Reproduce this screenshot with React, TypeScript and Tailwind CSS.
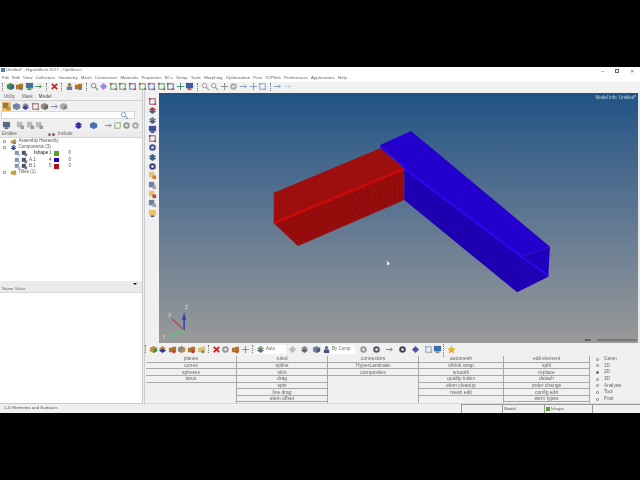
import { FC } from "react";

type Pt = [number, number];

const mix = (a: Pt, b: Pt, t: number): Pt => [a[0] + (b[0] - a[0]) * t, a[1] + (b[1] - a[1]) * t];

// wireframe over one face of the bar
const Mesh: FC<{ q: [Pt, Pt, Pt, Pt]; nu: number; nv: number; stroke: string; opacity: number }> = ({ q, nu, nv, stroke, opacity }) => {
  const [a, b, c, d] = q;
  const lines: [Pt, Pt][] = [];
  for (let i = 1; i < nu; i++) lines.push([mix(a, b, i / nu), mix(d, c, i / nu)]);
  for (let j = 1; j < nv; j++) lines.push([mix(a, d, j / nv), mix(b, c, j / nv)]);
  return (
    <g stroke={stroke} strokeOpacity={opacity} strokeWidth={1}>
      {lines.map(([p, r], i) => (
        <line key={i} x1={p[0]} y1={p[1]} x2={r[0]} y2={r[1]} />
      ))}
    </g>
  );
};

const Model: FC = () => (
  <svg className="absolute inset-0 h-full w-full" viewBox="0 0 477 250" preserveAspectRatio="none">
    <g transform="translate(101 27) scale(0.3333)">
      <polygon points="40,218 358,85 430,145 40,310" fill="#a00f0f" />
      <polygon points="40,310 430,145 430,240 112,378" fill="#980d0d" />
      <Mesh q={[[40, 218], [358, 85], [430, 145], [40, 310]]} nu={24} nv={8} stroke="#6f0808" opacity={0.3} />
      <Mesh q={[[40, 310], [430, 145], [430, 240], [112, 378]]} nu={24} nv={8} stroke="#5f0606" opacity={0.5} />
      <line x1={40} y1={309} x2={430} y2={146} stroke="#c80a0a" strokeWidth={8} />
      <polygon points="358,75 450,33 865,380 780,410 430,145" fill="#2400cf" />
      <polygon points="430,145 780,410 860,470 767,517 430,240" fill="#1f00b4" />
      <polygon points="780,410 865,380 860,470" fill="#2000bd" />
      <polygon points="358,75 358,85 430,145 430,138" fill="#2d0ad8" />
      <Mesh q={[[430, 145], [780, 410], [767, 517], [430, 240]]} nu={30} nv={8} stroke="#14008a" opacity={0.3} />
      <line x1={430} y1={146} x2={780} y2={410} stroke="#2a08e6" strokeWidth={7} />
      <line x1={780} y1={410} x2={860} y2={467} stroke="#2a08e6" strokeWidth={7} />
    </g>
    {/* triad */}
    <line x1={25} y1={237} x2={13} y2={226} stroke="#b05050" strokeWidth={1.5} />
    <line x1={25} y1={237} x2={25} y2={222} stroke="#3a3ac0" strokeWidth={1.5} />
    <polygon points="25,219 23,227 27,227" fill="#3a3ac0" />
    <line x1={25} y1={237} x2={9} y2={245} stroke="#60c080" strokeWidth={1.5} />
    <text x={9} y={224} fontSize={5} fill="#dddddd" fontFamily="Liberation Sans, sans-serif">X</text>
    <text x={26} y={216} fontSize={5} fill="#dddddd" fontFamily="Liberation Sans, sans-serif">Z</text>
    <text x={3} y={246} fontSize={5} fill="#dddddd" fontFamily="Liberation Sans, sans-serif">Y</text>
    {/* scale bar */}
    <line x1={436} y1={247} x2={476} y2={247} stroke="#555555" strokeWidth={1} />
    <line x1={424} y1={247} x2={430} y2={247} stroke="#555555" strokeWidth={1.5} />
    {/* cursor */}
    <polygon points="227,167 227,173 229,171.5 231,172" fill="#ffffff" stroke="#555555" strokeWidth={0.3} />
  </svg>
);

type Kind = "cube" | "layers" | "flag" | "person" | "folder" | "diamond" | "frame" | "mag" | "cross" | "star" | "x" | "arrow" | "gear" | "panel";

const Glyph: FC<{ kind: Kind; a?: string; b?: string; bg?: string }> = ({ kind, a = "#6a7f96", b = "#b3742a", bg }) => (
  <span className={`flex h-[9px] w-[9px] shrink-0 items-center justify-center ${bg ?? ""}`}>
    <svg viewBox="0 0 10 10" className="h-[9px] w-[9px]">
      {kind === "cube" && (
        <>
          <polygon points="1,3 5,1 9,3 9,7 5,9 1,7" fill={a} />
          <polygon points="5,5 9,3 9,7 5,9" fill={b} />
        </>
      )}
      {kind === "layers" && (
        <>
          <polygon points="1,4 5,1 9,4 5,6" fill={b} />
          <polygon points="1,6 5,4 9,6 5,9" fill={a} />
        </>
      )}
      {kind === "flag" && (
        <>
          <rect x={1} y={1} width={6} height={6} fill={a} />
          <rect x={5} y={5} width={4} height={4} fill={b} />
        </>
      )}
      {kind === "person" && (
        <>
          <circle cx={5} cy={3} r={2} fill={b} />
          <rect x={2} y={5} width={6} height={4} fill={a} />
        </>
      )}
      {kind === "folder" && (
        <>
          <polygon points="1,3 4,3 5,2 9,2 9,8 1,8" fill={b} />
          <rect x={5} y={6} width={3} height={3} fill={a} />
        </>
      )}
      {kind === "diamond" && <polygon points="5,1 9,5 5,9 1,5" fill={a} />}
      {kind === "frame" && (
        <>
          <rect x={2} y={2} width={6} height={6} fill="none" stroke={a} strokeWidth={1} />
          <rect x={1} y={1} width={2} height={2} fill={b} />
          <rect x={7} y={7} width={2} height={2} fill={b} />
        </>
      )}
      {kind === "mag" && (
        <>
          <circle cx={4} cy={4} r={2.5} fill="none" stroke={a} strokeWidth={1} />
          <line x1={6} y1={6} x2={9} y2={9} stroke={a} strokeWidth={1.2} />
        </>
      )}
      {kind === "cross" && <path d="M5 1V9M1 5H9" stroke={a} strokeWidth={1} />}
      {kind === "arrow" && <path d="M1 5H8M6 3L8 5L6 7" stroke={a} strokeWidth={1} fill="none" />}
      {kind === "star" && <polygon points="5,0.5 6.4,3.6 9.6,4 7.2,6.2 7.9,9.5 5,7.8 2.1,9.5 2.8,6.2 0.4,4 3.6,3.6" fill="#e3b51c" />}
      {kind === "x" && <path d="M2 2L8 8M8 2L2 8" stroke="#d02020" strokeWidth={2} />}
      {kind === "gear" && (
        <>
          <circle cx={5} cy={5} r={3.6} fill={a} />
          <circle cx={5} cy={5} r={1.4} fill="#eeeeee" />
        </>
      )}
      {kind === "panel" && (
        <>
          <rect x={1} y={1} width={8} height={6} fill={a} />
          <rect x={3} y={7} width={4} height={2} fill={b} />
        </>
      )}
    </svg>
  </span>
);

const Sep: FC = () => <span className="mx-[2px] h-[8px] w-px shrink-0 border-l border-dotted border-[#777]" />;

const menus = ["File", "Edit", "View", "Collectors", "Geometry", "Mesh", "Connectors", "Materials", "Properties", "BCs", "Setup", "Tools", "Morphing", "Optimization", "Post", "XYPlots", "Preferences", "Applications", "Help"];

const col1 = ["planes", "cones", "spheres", "torus"];
const col2 = ["ruled", "spline", "skin", "drag", "spin", "line drag", "elem offset"];
const col3 = ["connectors", "HyperLaminate", "composites"];
const col4 = ["automesh", "shrink wrap", "smooth", "quality index", "elem cleanup", "mesh edit"];
const col5 = ["edit element", "split", "replace", "detach", "order change", "config edit", "elem types"];
const radios = ["Geom", "1D", "2D", "3D", "Analysis", "Tool", "Post"];

const ButtonCol: FC<{ items: string[]; className: string }> = ({ items, className }) => (
  <div className={`flex shrink-0 flex-col ${className}`}>
    {items.map((label) => (
      <div key={label} className="flex h-[6.65px] items-center justify-center border-b border-[#a8a8a8] text-[5px] leading-none text-[#666]">
        {label}
      </div>
    ))}
  </div>
);

const Expander: FC = () => <span className="mr-[3px] h-[3px] w-[3px] shrink-0 border border-[#aaa]" />;

const TreeRoot: FC<{ label: string; icon: Kind; a: string; b: string }> = ({ label, icon, a, b }) => (
  <div className="flex h-[6.3px] items-center whitespace-nowrap pl-[3px] text-[4.5px] leading-none text-[#555]">
    <Expander />
    <span className="mr-[0.5px] scale-75">
      <Glyph kind={icon} a={a} b={b} />
    </span>
    {label}
  </div>
);

const TreeLeaf: FC<{ label: string; id: string; color: string; bold?: boolean }> = ({ label, id, color, bold }) => (
  <div className="flex h-[6.3px] items-center whitespace-nowrap pl-[13px] text-[4.5px] leading-none text-[#555]">
    <span className="scale-75">
      <Glyph kind="flag" a="#7f93b0" b="#b8c4d4" />
    </span>
    <span className="-ml-[2px] scale-75">
      <Glyph kind="flag" a="#4a5568" b="#6a7588" />
    </span>
    <span className={`w-[20px] ${bold ? "pl-[5px] font-bold" : ""}`}>{label}</span>
    <span className="w-[5px]">{id}</span>
    <span className={`h-[4.5px] w-[4.5px] shrink-0 ${color}`} />
    <span className="ml-[10px]">0</span>
  </div>
);

export default function App() {
  return (
    <div className="flex h-[480px] w-[640px] flex-col overflow-hidden bg-black font-['Liberation_Sans',sans-serif]">
      <div className="h-[67px] shrink-0" />
      <div className="flex h-[346px] shrink-0 flex-col bg-[#f0f0f0] blur-[0.35px]">
        {/* title */}
        <div className="flex h-[7px] shrink-0 items-center justify-between bg-white pl-[1px] pr-[6px] text-[4.3px] leading-none text-[#666]">
          <div className="flex items-center gap-[1px]">
            <span className="h-[4px] w-[4px] bg-[#5a7fa8]" />
            <span>Untitled* - HyperMesh 2017 - OptiStruct</span>
          </div>
          <div className="flex items-center gap-[11px] text-[6px] text-[#555]">
            <span>–</span>
            <span className="h-[4px] w-[4px] border border-[#666]" />
            <span>×</span>
          </div>
        </div>
        {/* menu */}
        <div className="flex h-[8px] shrink-0 items-center gap-[3.2px] bg-white pl-[2px] text-[4.4px] leading-none text-[#666]">
          {menus.map((m) => (
            <span key={m}>{m}</span>
          ))}
        </div>
        {/* main toolbar */}
        <div className="flex h-[9px] shrink-0 items-center gap-[0.6px] bg-[#f2f2f2]">
          <Sep />
          <Glyph kind="cube" a="#3f8f4a" b="#3a5fa8" />
          <Glyph kind="folder" />
          <Glyph kind="panel" a="#4a6f9a" b="#3a8f4a" />
          <Glyph kind="arrow" a="#3a8f4a" />
          <Sep />
          <Glyph kind="x" />
          <Sep />
          <Glyph kind="person" />
          <Glyph kind="folder" />
          <Sep />
          <Glyph kind="mag" />
          <Glyph kind="diamond" a="#9a8ad0" />
          <Glyph kind="frame" a="#3aa060" b="#d04040" />
          <Glyph kind="frame" a="#3aa060" b="#d04040" />
          <Glyph kind="frame" a="#3a60c0" b="#d04040" />
          <Glyph kind="frame" a="#3aa060" b="#d04040" />
          <Glyph kind="frame" a="#3a60c0" b="#d04040" />
          <Glyph kind="frame" a="#3aa060" b="#d04040" />
          <Glyph kind="frame" a="#3a60c0" b="#d04040" />
          <Glyph kind="cross" a="#3a8f6a" />
          <Glyph kind="panel" a="#3a5fa8" b="#d04040" />
          <Sep />
          <Glyph kind="mag" a="#999" />
          <Glyph kind="mag" a="#999" />
          <Glyph kind="cross" a="#888" />
          <Glyph kind="gear" a="#aaa" />
          <Glyph kind="arrow" a="#7a9ac0" />
          <Glyph kind="cross" a="#7a9ac0" />
          <Glyph kind="frame" a="#7a9ac0" b="#aaa" />
          <Sep />
          <Glyph kind="arrow" a="#7a9ac0" />
          <Glyph kind="arrow" a="#cccccc" />
        </div>
        {/* body */}
        <div className="flex min-h-0 flex-1">
          {/* left panel */}
          <div className="flex w-[143px] shrink-0 flex-col border-r border-[#c8c8c8] bg-[#f0f0f0] pt-[3px]">
            <div className="flex h-[7px] shrink-0 items-end border-b border-[#cfcfcf] pl-[4px] text-[4.5px] leading-none text-[#666]">
              <span className="pb-[1px]">Utility</span>
              <span className="ml-[7px] pb-[1px]">Mask</span>
              <span className="ml-[5px] bg-white px-[1px] pb-[1px] font-bold">Model</span>
            </div>
            <div className="flex h-[10px] shrink-0 items-center gap-[0.5px] pl-[2px]">
              <span className="flex h-[9px] w-[9px] items-center justify-center bg-[#e8c070]">
                <Glyph kind="flag" a="#8a7a4a" b="#c09030" />
              </span>
              <Glyph kind="cube" a="#6a7fc0" b="#888" />
              <Glyph kind="layers" a="#4040b0" b="#888" />
              <Glyph kind="frame" a="#a05050" b="#888" />
              <Glyph kind="cube" a="#888" b="#666" />
              <Glyph kind="arrow" a="#7a7aa0" />
              <Glyph kind="cube" a="#aaa" b="#888" />
            </div>
            <div className="mx-[1px] flex h-[8px] w-[134px] shrink-0 items-center justify-end gap-[2px] border border-[#d8d8d8] bg-white pr-[5px]">
              <Glyph kind="mag" a="#7a9ac0" />
            </div>
            <div className="flex h-[12px] shrink-0 items-center pl-[2px]">
              <Glyph kind="panel" a="#556a88" b="#556a88" />
              <span className="ml-[5px] flex gap-[0.5px]">
                <Glyph kind="flag" a="#bbb" b="#999" />
                <Glyph kind="flag" a="#bbb" b="#999" />
                <Glyph kind="flag" a="#bbb" b="#999" />
              </span>
              <span className="ml-[30px] flex">
                <Glyph kind="layers" a="#3030a0" b="#3030a0" />
                <span className="ml-[6px]">
                  <Glyph kind="cube" a="#4a6fb0" b="#4a6fb0" />
                </span>
                <span className="ml-[6px]">
                  <Glyph kind="arrow" a="#888" />
                </span>
                <Glyph kind="frame" a="#80a060" b="#ddd" />
                <Glyph kind="gear" a="#999" />
                <Glyph kind="gear" a="#aaa" />
              </span>
            </div>
            <div className="flex h-[7px] shrink-0 items-center border-b border-[#d8d8d8] bg-[#ebebeb] pl-[2px] text-[4.5px] leading-none text-[#666]">
              <span className="w-[46px]">Entities</span>
              <span className="h-[3px] w-[3px] rounded-full bg-[#777]" />
              <span className="ml-[1px] h-[3px] w-[3px] rounded-full bg-[#a04080]" />
              <span className="ml-[3px]">Include</span>
            </div>
            {/* tree */}
            <div className="flex min-h-0 flex-1 flex-col bg-white">
              <TreeRoot label="Assembly Hierarchy" icon="folder" a="#5a6f9a" b="#c79a3a" />
              <TreeRoot label="Components (3)" icon="layers" a="#2f3fa0" b="#6a7f96" />
              <TreeLeaf label="lshape" bold id="1" color="bg-[#5aa02c]" />
              <TreeLeaf label="A.1" id="4" color="bg-[#2000c0]" />
              <TreeLeaf label="B.1" id="5" color="bg-[#b01010]" />
              <TreeRoot label="Titles (1)" icon="folder" a="#c79a3a" b="#c79a3a" />
            </div>
            <div className="flex h-[5px] shrink-0 items-center justify-end bg-[#ebebeb] pr-[5px]">
              <span className="h-0 w-0 border-x-[2px] border-t-[2px] border-x-transparent border-t-black" />
            </div>
            <div className="flex h-[7px] shrink-0 items-center border-b border-[#d8d8d8] bg-[#ebebeb] pl-[2px] text-[4.3px] leading-none text-[#666]">
              Name Value
            </div>
            <div className="h-[111px] shrink-0 border-b border-[#c8c8c8] bg-white" />
          </div>
          {/* right part */}
          <div className="ml-[1px] flex min-w-0 flex-1 flex-col border-l border-[#cccccc]">
            <div className="flex min-h-0 flex-1 pl-[1px]">
              {/* vertical toolbar */}
              <div className="flex w-[13px] shrink-0 flex-col items-center gap-[0.3px] pt-[6px]">
                <Glyph kind="frame" a="#a04050" b="#a04050" />
                <Glyph kind="layers" a="#506080" b="#c04040" />
                <Glyph kind="layers" a="#506080" b="#808080" />
                <Glyph kind="panel" a="#405090" b="#405090" />
                <Glyph kind="frame" a="#a04050" b="#506080" />
                <Glyph kind="gear" a="#4050a0" />
                <Glyph kind="layers" a="#406080" b="#406080" />
                <Glyph kind="gear" a="#404080" />
                <Glyph kind="flag" a="#e8c070" b="#c08040" />
                <Glyph kind="flag" a="#7080a0" b="#a0a0b0" />
                <Glyph kind="flag" a="#e8c070" b="#c04040" />
                <Glyph kind="flag" a="#7080a0" b="#a0a0b0" />
                <Glyph kind="panel" a="#e8c070" b="#4060a0" />
              </div>
              {/* viewport */}
              <div className="relative mt-[2px] min-w-0 flex-1 border-r-2 border-[#e8e8e8] bg-gradient-to-b from-[#1f5385] to-[#9a9a9a]">
                <Model />
                <span className="absolute right-[2px] top-[3px] text-[4.5px] leading-none text-[#c8d6e2]">Model Info: Untitled*</span>
              </div>
            </div>
            {/* bottom toolbar */}
            <div className="-ml-[2px] flex h-[12px] shrink-0 items-center gap-[0.6px]">
              <Sep />
              <Glyph kind="cube" a="#c09040" b="#3a8f4a" />
              <Glyph kind="layers" a="#3030a0" b="#c09040" />
              <Glyph kind="folder" a="#c04040" />
              <Glyph kind="cube" a="#888" b="#c09040" />
              <Glyph kind="folder" a="#d03030" />
              <Glyph kind="folder" a="#60a060" b="#e0c070" />
              <Sep />
              <Glyph kind="x" />
              <Glyph kind="gear" a="#999" />
              <Glyph kind="folder" a="#d05030" />
              <Glyph kind="cross" a="#b07070" />
              <Sep />
              <div className="flex h-[9px] w-[30px] items-center gap-[1px] bg-white text-[4.5px] leading-none text-[#666]">
                <Glyph kind="layers" a="#607080" b="#80a070" />
                Auto
              </div>
              <span className="ml-[2px] flex items-center gap-[3px]">
                <Glyph kind="diamond" a="#bbb" />
                <Glyph kind="layers" a="#666" b="#888" />
                <Glyph kind="cube" a="#7080a0" b="#556" />
              </span>
              <div className="flex h-[9px] w-[33px] items-center gap-[1px] bg-white text-[4.5px] leading-none text-[#666]">
                <Glyph kind="person" a="#405080" b="#607090" />
                By Comp
              </div>
              <span className="ml-[3px] flex items-center gap-[4px]">
                <Glyph kind="gear" a="#999" />
                <Glyph kind="gear" a="#556" />
                <Glyph kind="arrow" a="#777" />
                <Glyph kind="gear" a="#445" />
                <Glyph kind="diamond" a="#5050b0" />
                <Glyph kind="frame" a="#80a0a0" b="#aaa" />
                <span className="-ml-[4px]">
                  <Glyph kind="panel" a="#3a70b0" b="#888" />
                </span>
              </span>
              <span className="-ml-[1px]">
                <Sep />
              </span>
              <Glyph kind="star" />
            </div>
            {/* buttons */}
            <div className="flex h-[49px] shrink-0 border-b border-[#d8d8d8] pl-[1px] pt-[1px]">
              <ButtonCol items={col1} className="w-[91px] border-r border-[#a8a8a8]" />
              <ButtonCol items={col2} className="w-[91px] border-r border-[#a8a8a8]" />
              <ButtonCol items={col3} className="w-[90px]" />
              <ButtonCol items={col4} className="w-[86px] border-x border-[#a8a8a8]" />
              <ButtonCol items={col5} className="w-[86px] border-r border-[#a8a8a8]" />
              <div className="flex flex-col pl-[6px]">
                {radios.map((r) => (
                  <div key={r} className="flex h-[6.65px] items-center gap-[5px] text-[4.7px] leading-none text-[#666]">
                    <span className={`h-[3px] w-[3px] rounded-full border border-[#777] ${r === "2D" ? "bg-[#333]" : "bg-white"}`} />
                    {r}
                  </div>
                ))}
              </div>
            </div>
          </div>
        </div>
        {/* status */}
        <div className="flex h-[9px] shrink-0 items-center bg-[#f0f0f0] text-[4.4px] leading-none text-[#555]">
          <span className="w-[461px] pl-[4px]">2-D Elements and Surfaces</span>
          <span className="flex h-full w-[42px] items-center border-x border-t border-[#999]" />
          <span className="flex h-full w-[42px] items-center border-r border-t border-[#999] pl-[1px]">Model</span>
          <span className="flex h-full w-[48px] items-center gap-[1px] border-r border-t border-[#999] pl-[1px]">
            <span className="h-[4px] w-[4px] bg-[#5aa02c]" />
            lshape
          </span>
          <span className="h-full flex-1 border-t border-[#999]" />
        </div>
      </div>
    </div>
  );
}
